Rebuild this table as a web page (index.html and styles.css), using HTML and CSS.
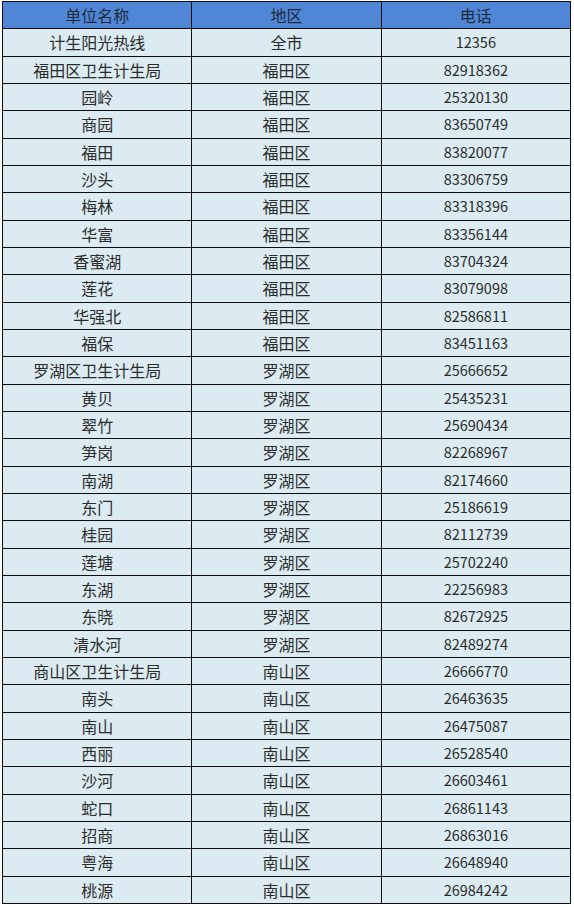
FILE: index.html
```html
<!DOCTYPE html>
<html lang="zh-CN">
<head>
<meta charset="utf-8">
<title>卫生计生热线</title>
<link rel="stylesheet" href="styles.css">
</head>
<body>
<div class="table">
  <div class="cell head">单位名称</div><div class="cell head">地区</div><div class="cell head">电话</div>
  <div class="cell">计生阳光热线</div><div class="cell">全市</div><div class="cell num">12356</div>
  <div class="cell">福田区卫生计生局</div><div class="cell">福田区</div><div class="cell num">82918362</div>
  <div class="cell">园岭</div><div class="cell">福田区</div><div class="cell num">25320130</div>
  <div class="cell">商园</div><div class="cell">福田区</div><div class="cell num">83650749</div>
  <div class="cell">福田</div><div class="cell">福田区</div><div class="cell num">83820077</div>
  <div class="cell">沙头</div><div class="cell">福田区</div><div class="cell num">83306759</div>
  <div class="cell">梅林</div><div class="cell">福田区</div><div class="cell num">83318396</div>
  <div class="cell">华富</div><div class="cell">福田区</div><div class="cell num">83356144</div>
  <div class="cell">香蜜湖</div><div class="cell">福田区</div><div class="cell num">83704324</div>
  <div class="cell">莲花</div><div class="cell">福田区</div><div class="cell num">83079098</div>
  <div class="cell">华强北</div><div class="cell">福田区</div><div class="cell num">82586811</div>
  <div class="cell">福保</div><div class="cell">福田区</div><div class="cell num">83451163</div>
  <div class="cell">罗湖区卫生计生局</div><div class="cell">罗湖区</div><div class="cell num">25666652</div>
  <div class="cell">黄贝</div><div class="cell">罗湖区</div><div class="cell num">25435231</div>
  <div class="cell">翠竹</div><div class="cell">罗湖区</div><div class="cell num">25690434</div>
  <div class="cell">笋岗</div><div class="cell">罗湖区</div><div class="cell num">82268967</div>
  <div class="cell">南湖</div><div class="cell">罗湖区</div><div class="cell num">82174660</div>
  <div class="cell">东门</div><div class="cell">罗湖区</div><div class="cell num">25186619</div>
  <div class="cell">桂园</div><div class="cell">罗湖区</div><div class="cell num">82112739</div>
  <div class="cell">莲塘</div><div class="cell">罗湖区</div><div class="cell num">25702240</div>
  <div class="cell">东湖</div><div class="cell">罗湖区</div><div class="cell num">22256983</div>
  <div class="cell">东晓</div><div class="cell">罗湖区</div><div class="cell num">82672925</div>
  <div class="cell">清水河</div><div class="cell">罗湖区</div><div class="cell num">82489274</div>
  <div class="cell">商山区卫生计生局</div><div class="cell">南山区</div><div class="cell num">26666770</div>
  <div class="cell">南头</div><div class="cell">南山区</div><div class="cell num">26463635</div>
  <div class="cell">南山</div><div class="cell">南山区</div><div class="cell num">26475087</div>
  <div class="cell">西丽</div><div class="cell">南山区</div><div class="cell num">26528540</div>
  <div class="cell">沙河</div><div class="cell">南山区</div><div class="cell num">26603461</div>
  <div class="cell">蛇口</div><div class="cell">南山区</div><div class="cell num">26861143</div>
  <div class="cell">招商</div><div class="cell">南山区</div><div class="cell num">26863016</div>
  <div class="cell">粤海</div><div class="cell">南山区</div><div class="cell num">26648940</div>
  <div class="cell">桃源</div><div class="cell">南山区</div><div class="cell num">26984242</div>
</div>
</body>
</html>
```
FILE: styles.css
```css
html, body {
  margin: 0;
  padding: 0;
  background: #ffffff;
}

.table {
  box-sizing: border-box;
  width: 569px;
  height: 903px;
  margin: 1px 0 0 2px;
  display: grid;
  grid-template-columns: repeat(3, 1fr);
  grid-template-rows: repeat(33, 1fr);
  gap: 1px;
  border: 1px solid #0d0d0d;
  background: #0d0d0d;
  font-family: "Noto Sans CJK SC", "Noto Sans", sans-serif;
  color: #2b2b2b;
}

.cell {
  background: #dbebf1;
  display: flex;
  align-items: center;
  justify-content: center;
  font-size: 16px;
  line-height: 1;
}

.cell.head {
  background: #4f87d6;
  color: #1f2a3a;
}

.cell.num {
  font-size: 14.5px;
}
```
